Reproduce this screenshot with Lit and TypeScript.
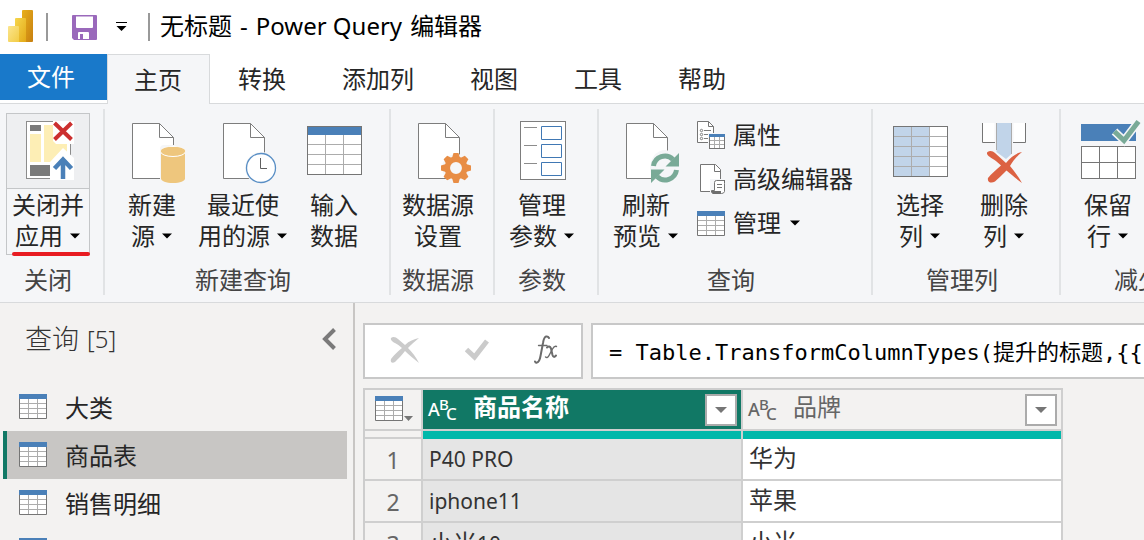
import { LitElement, html, svg, css, nothing } from 'lit';
import { customElement, property, state } from 'lit/decorators.js';
import { classMap } from 'lit/directives/class-map.js';

const page = svg`<path d="M12.5 3.5H39.5L53.5 17.5V58.5H12.5Z" fill="#fff" stroke="#7d7d7d"/><path d="M39.5 3.5V17.5H53.5" fill="none" stroke="#7d7d7d"/>`;

const gearTeeth = [0, 45, 90, 135, 180, 225, 270, 315];

const bigIcons: Record<string, unknown> = {
  closeApply: svg`
    <rect x="10.5" y="2.5" width="44" height="57" fill="#fff" stroke="#8c8c8c"/>
    <rect x="14" y="6" width="11" height="6" fill="#7a7a7a"/>
    <rect x="14" y="15" width="11" height="28" fill="#fdeeb5"/>
    <rect x="28" y="6" width="23" height="37" fill="#fdeeb5"/>
    <rect x="14" y="46" width="20" height="11" fill="#7a7a7a"/>
    <path d="M37 2H58V25H40L37 22Z" fill="#fff"/>
    <path d="M47 29L58 39V61H34V43Z" fill="#fff"/>
    <path d="M38.500 4L55.500 20.500M55.500 4L38.500 20.500" stroke="#cc2f2f" stroke-width="4"/>
    <path d="M47 60V41M38.500 49.500L47 40.500L55.500 49.500" fill="none" stroke="#4a80b8" stroke-width="4.500"/>`,
  newSource: svg`${page}
    <rect x="40" y="25" width="26" height="38" rx="4" fill="#f5f6f8"/>
    <path d="M41 31V58.500C41 61 46 63 53 63S65 61 65 58.500V31Z" fill="#eec67d"/>
    <ellipse cx="53" cy="31.500" rx="12.500" ry="5" fill="#eec67d" stroke="#fff"/>
    <path d="M41 31C41 28.500 46 27 53 27S65 28.500 65 31" fill="#eec67d"/>`,
  recent: svg`${page}
    <circle cx="50" cy="48" r="16" fill="#f5f6f8"/>
    <circle cx="50" cy="48" r="14.500" fill="#fff" stroke="#5a8fc5" stroke-width="1.300"/>
    <path d="M49.500 38V48.500H56" fill="none" stroke="#5f5f5f"/>`,
  enterData: svg`
    <rect x="5.500" y="6.500" width="54" height="48" fill="#fff"/>
    <path d="M23.500 15V54M41.500 15V54M6 24.500H59M6 34.500H59M6 44.500H59" stroke="#acacac"/>
    <rect x="6" y="7" width="53" height="8" fill="#4a80b8"/>
    <rect x="5.500" y="6.500" width="54" height="48" fill="none" stroke="#757575"/>`,
  settings: svg`${page}
    <circle cx="50" cy="48" r="14" fill="#f5f6f8"/>
    ${gearTeeth.map((a) => svg`<path d="M46 38L47.500 33H52.500L54 38Z" fill="#e88d45" transform="rotate(${a} 50 48)"/>`)}
    <circle cx="50" cy="48" r="8.700" fill="none" stroke="#e88d45" stroke-width="5.500"/>`,
  params: svg`
    <rect x="10.500" y="1.500" width="45" height="58" fill="#fff" stroke="#7d7d7d"/>
    <path d="M14 7.500H27M14 25.500H27M14 43.500H27" stroke="#8c8c8c"/>
    <path d="M31.500 6.500H51.500V19.500H31.500ZM31.500 24.500H51.500V37.500H31.500ZM31.500 42.500H51.500V55.500H31.500Z" fill="#fff" stroke="#4078b4"/>`,
  refresh: svg`${page}
    <path d="M37 47A14 15 0 0 1 62 36L65 33V47H37V63Z" fill="#f5f6f8"/>
    <circle cx="51" cy="48" r="15" fill="#f5f6f8"/>
    <path d="M39.500 46A11.500 11.500 0 0 1 59 39.500M62.500 50A11.500 11.500 0 0 1 43 56.500" fill="none" stroke="#79aa97" stroke-width="5"/>
    <path d="M65 33V46.500H51.500ZM37 63V49.500H50.500Z" fill="#79aa97"/>`,
  chooseCols: svg`
    <rect x="5.500" y="6.500" width="54" height="50" fill="#fff"/>
    <rect x="6" y="7" width="35" height="49" fill="#c1d4e9"/>
    <path d="M23.500 7V56M41.500 7V56M6 16.500H59M6 26.500H59M6 36.500H59M6 46.500H59" stroke="#acacac"/>
    <rect x="5.500" y="6.500" width="54" height="50" fill="none" stroke="#757575"/>`,
  removeCols: svg`
    <path d="M10.500 3V22.500H22.500V3" fill="#fff"/><path d="M41.500 3V22.500H53.500V3" fill="#fff"/>
    <path d="M10.500 3V22.500H23M41 22.500H53.500V3" fill="none" stroke="#757575"/>
    <path d="M24.500 3V32L34 39L39.500 34V3Z" fill="#c1d4e9"/>
    <path d="M24.500 3V30M39.500 3V34" stroke="#acacac"/>
    <path d="M15.500 32C18 30 21 31 23 33L34 43C39 37 44 33 50 32C45 36 41 41 38 46C42 51 46 56 50 63C44 59 39 54 34.500 50.500C30 55 26 59 23 61.500C19 64 15 62 16 58C19 54 24 50 29 45.500C25 41 19 38 16.500 36C15 34.500 14.500 33 15.500 32Z" fill="#dc6243" stroke="#f5f6f8" stroke-width="1.500" paint-order="stroke"/>`,
  keepRows: svg`
    <rect x="5" y="4" width="55" height="17" fill="#4a80b8"/>
    <rect x="5.500" y="26.500" width="54" height="32" fill="#fff" stroke="#757575"/>
    <path d="M23.500 27V58M41.500 27V58M6 42.500H59" stroke="#757575"/>
    <path d="M38.500 11.500L48 20.500L62.500 1.500" fill="none" stroke="#f5f6f8" stroke-width="8"/>
    <path d="M38.500 11.500L48 20.500L62.500 1.500" fill="none" stroke="#79aa97" stroke-width="5"/>`,
};

const tableIcon = html`<svg class="sheet" width="28" height="25" viewBox="0 0 28 25" aria-hidden="true">
  <rect x="0.5" y="0.5" width="27" height="24" fill="#fff"/>
  <path d="M9.500 5V24M18.500 5V24M1 9.500H27M1 14.500H27M1 19.500H27" stroke="#acacac"/>
  <path d="M0.500 4V24.500H27.500V4" fill="none" stroke="#757575"/>
  <rect width="28" height="5" fill="#4a80b8"/></svg>`;

const propsIcon = html`<svg width="28" height="28" viewBox="0 0 28 28" aria-hidden="true">
  <path d="M0.500 0.500H11.500L16.500 5.500V21.500H0.500Z" fill="#fff" stroke="#757575"/>
  <path d="M11.500 0.500V5.500H16.500" fill="none" stroke="#757575"/>
  <g fill="none" stroke="#7d7d7d"><circle cx="4.500" cy="9.500" r="1.200"/><circle cx="4.500" cy="13.500" r="1.200"/><circle cx="4.500" cy="17.500" r="1.200"/><path d="M7 9.500H14M7 13.500H11M7 17.500H11"/></g>
  <rect x="11" y="12" width="17" height="16" fill="#f5f6f8"/>
  <rect x="12.500" y="13.500" width="15" height="14" fill="#fff" stroke="#757575"/>
  <path d="M17.500 16V27M22.500 16V27M13 19.500H27M13 23.500H27" stroke="#acacac"/>
  <rect x="12" y="13" width="16" height="3" fill="#4a80b8"/></svg>`;

const scriptIcon = html`<svg width="28" height="30" viewBox="0 0 28 30" aria-hidden="true">
  <path d="M3.500 0.500H18.500L23.500 5.500V27.500H3.500Z" fill="#fff" stroke="#757575"/>
  <path d="M17.500 0.500V7.500H23.500" fill="none" stroke="#757575"/>
  <path d="M13 15H30V30H13Z" fill="#f5f6f8"/>
  <path d="M17.500 26.500V18.500Q17.500 16.500 19.500 16.500H29.500V19.500H27.500V27.500Q27 29.500 24.500 29.500H16Q14 29 14.500 26.500Z" fill="#fff" stroke="#757575"/>
  <path d="M20 20.500H25M20 23.500H25" stroke="#757575"/><path d="M14 27H24V30H16Z" fill="#6e6e6e"/><path d="M27 16H30V19H27Z" fill="#6e6e6e"/></svg>`;

const caret = html`<svg class="caret" width="12" height="6" viewBox="0 0 12 6" aria-hidden="true"><path d="M1 0.500H11L6 5.500Z" fill="#000"/></svg>`;

interface BigCommand { icon: string; top: string; bottom: string; menu?: boolean; hot?: boolean }
interface Group { name: string; commands: BigCommand[]; side?: boolean }

const groups: Group[] = [
  { name: '关闭', commands: [{ icon: 'closeApply', top: '关闭并', bottom: '应用', menu: true, hot: true }] },
  { name: '新建查询', commands: [
    { icon: 'newSource', top: '新建', bottom: '源', menu: true },
    { icon: 'recent', top: '最近使', bottom: '用的源', menu: true },
    { icon: 'enterData', top: '输入', bottom: '数据' },
  ] },
  { name: '数据源', commands: [{ icon: 'settings', top: '数据源', bottom: '设置' }] },
  { name: '参数', commands: [{ icon: 'params', top: '管理', bottom: '参数', menu: true }] },
  { name: '查询', side: true, commands: [{ icon: 'refresh', top: '刷新', bottom: '预览', menu: true }] },
  { name: '管理列', commands: [
    { icon: 'chooseCols', top: '选择', bottom: '列', menu: true },
    { icon: 'removeCols', top: '删除', bottom: '列', menu: true },
  ] },
  { name: '减少行', commands: [
    { icon: 'keepRows', top: '保留', bottom: '行', menu: true },
    { icon: '', top: '', bottom: '' },
  ] },
];

const shared = css`
  * { box-sizing: border-box; }
  button {
    font: inherit;
    color: inherit;
    background: none;
    border: 0;
    padding: 0;
    margin: 0;
    text-align: inherit;
  }
  svg { display: block; flex: none; }
`;

@customElement('pq-titlebar')
class PqTitlebar extends LitElement {
  static styles = [shared, css`
    :host { display: flex; align-items: center; height: 54px; padding: 0 8px; background: #fff; flex: none; }
    .rule { width: 2px; height: 28px; background: #999; }
    .logo { margin-right: 13px; }
    .save { margin: 0 18px 0 24px; }
    .more { margin-right: 20px; }
    h1 { display: flex; gap: 8px; margin: 0 0 0 10px; padding-bottom: 2px; font-size: 24px; line-height: 32px; font-weight: 400; color: #000; white-space: nowrap; }
  `];
  render() {
    return html`
      <svg class="logo" width="25" height="34" viewBox="0 0 25 34" aria-hidden="true">
        <defs>
          <linearGradient id="a" x1="0" y1="0" x2="1" y2="1"><stop offset="0" stop-color="#e8b01c"/><stop offset="1" stop-color="#c77f10"/></linearGradient>
          <linearGradient id="b" x1="0" y1="0" x2="1" y2="1"><stop offset="0" stop-color="#f6d64d"/><stop offset="1" stop-color="#e3a917"/></linearGradient>
          <linearGradient id="c" x1="0" y1="0" x2="1" y2="1"><stop offset="0" stop-color="#fbe58e"/><stop offset="1" stop-color="#f2cc45"/></linearGradient>
        </defs>
        <rect x="14" y="0" width="11" height="32" rx="1" fill="url(#a)"/>
        <path d="M7 9a1 1 0 0 1 1-1H17a1 1 0 0 1 1 1V32H7Z" fill="url(#b)"/>
        <path d="M0 17a1 1 0 0 1 1-1H10a1 1 0 0 1 1 1V32H1a1 1 0 0 1-1-1Z" fill="url(#c)"/>
      </svg>
      <span class="rule"></span>
      <button class="save" aria-label="保存">
        <svg width="25" height="25" viewBox="0 0 25 25"><path d="M1 0H24a1 1 0 0 1 1 1V24a1 1 0 0 1-1 1H2L0 23V1a1 1 0 0 1 1-1Z" fill="#9a69bb"/><path d="M4 1.500H21V12a1 1 0 0 1-1 1H5a1 1 0 0 1-1-1Z" fill="#fff"/><path d="M6 18a1 1 0 0 1 1-1H16a1 1 0 0 1 1 1V24H11V19H8V24H6Z" fill="#fff"/><rect x="8" y="19" width="3" height="5" fill="#9a69bb"/></svg>
      </button>
      <button class="more" aria-label="自定义">
        <svg width="13" height="10" viewBox="0 0 13 10"><path d="M1 0.500H12" stroke="#000"/><path d="M1.500 4H11.500L6.500 9Z" fill="#000"/></svg>
      </button>
      <span class="rule"></span>
      <h1><span>无标题</span> <span>-</span> <span>Power Query</span> <span>编辑器</span></h1>`;
  }
}

@customElement('pq-tabs')
class PqTabs extends LitElement {
  @state() private active = '主页';
  static styles = [shared, css`
    :host { display: block; flex: none; background: #fff; }
    nav { display: flex; height: 50px; font-size: 24px; line-height: 32px; color: #262626; border-bottom: 1px solid #d8dadc; }
    button { padding: 1px 28px 0; height: 49px; white-space: nowrap; }
    .file { height: 46px; padding: 0 32px 0 27px; background: #1979ca; color: #fff; }
    .active { height: 50px; padding: 0 27px 0 26px; background: #f5f6f8; border: 1px solid #d8dadc; border-bottom: 0; }
  `];
  render() {
    return html`<nav>
      <button class="file">文件</button>
      ${['主页', '转换', '添加列', '视图', '工具', '帮助'].map((t) => html`
        <button class=${classMap({ active: t === this.active })} @click=${() => { this.active = t; }}>${t}</button>`)}
    </nav>`;
  }
}

@customElement('pq-ribbon')
class PqRibbon extends LitElement {
  static styles = [shared, css`
    :host { display: block; flex: none; overflow: hidden; background: #f5f6f8; border-bottom: 1px solid #d8dadc; color: #262626; font-size: 24px; }
    .groups { display: flex; padding: 5px 0 7px 1px; }
    .group { flex: none; display: flex; flex-direction: column; align-items: center; padding: 4px 13px 0 5px; border-right: 2px solid #e1e3e5; height: 186px; }
    .row { display: flex; }
    .big { display: flex; flex-direction: column; align-items: center; min-width: 84px; height: 142px; padding: 0 4px; text-align: center; position: relative; }
    .art { display: flex; flex-direction: column; align-items: center; justify-content: center; align-self: stretch; height: 76px; padding-top: 1px; }
    .art svg { overflow: visible; }
    .text { line-height: 31px; white-space: nowrap; }
    .line { display: flex; align-items: center; justify-content: center; }
    .caret { margin-left: 6px; }
    .hot { padding: 0; border: 1px solid #c4c6c8; }
    .hot .art { height: 75px; padding: 0; background: #eeeff1; border-bottom: 1px solid #c4c6c8; }
    .mark { position: absolute; left: 5px; right: -1px; bottom: -2px; height: 4px; border-radius: 2px; background: #e81c22; }
    .name { margin: 9px 0 0; line-height: 32px; color: #444; white-space: nowrap; }
    .side { display: flex; flex-direction: column; padding-left: 9px; margin-right: -3px; }
    .side button { display: grid; grid-template-columns: 28px auto auto; column-gap: 8px; align-items: center; justify-content: start; height: 44px; line-height: 32px; white-space: nowrap; }
    .side .caret { margin: 0; }
  `];
  private big(c: BigCommand) {
    return html`<button class=${classMap({ big: true, hot: !!c.hot })}>
      <span class="art"><svg width="64" height="64" viewBox="0 0 64 64" aria-hidden="true">${bigIcons[c.icon] ?? nothing}</svg></span>
      <span class="text"><span class="line">${c.top}</span><span class="line">${c.bottom}${c.menu ? caret : nothing}</span></span>
      ${c.hot ? html`<span class="mark"></span>` : nothing}
    </button>`;
  }
  render() {
    return html`<div class="groups">${groups.map((g) => html`
      <section class="group" aria-label=${g.name}>
        <div class="row">
          ${g.commands.map((c) => this.big(c))}
          ${g.side ? html`<div class="side">
            <button>${propsIcon}<span>属性</span></button>
            <button>${scriptIcon}<span>高级编辑器</span></button>
            <button>${tableIcon}<span>管理</span>${caret}</button>
          </div>` : nothing}
        </div>
        <p class="name">${g.name}</p>
      </section>`)}</div>`;
  }
}

@customElement('pq-queries')
class PqQueries extends LitElement {
  @state() private selected = 1;
  static styles = [shared, css`
    :host { display: block; flex: 0 0 353px; border-right: 2px solid #c8c6c4; background: #f3f2f1; color: #262626; overflow: hidden; }
    header { display: flex; align-items: center; justify-content: space-between; height: 72px; padding: 0 17px 0 25px; }
    h2 { display: flex; gap: 8px; margin: 0; font-size: 27px; line-height: 36px; font-weight: 300; color: #333; }
    .count { font-size: 24px; }
    ul { list-style: none; margin: 0; padding: 8px 6px 0 3px; }
    .item { display: flex; align-items: center; gap: 18px; width: 100%; height: 48px; padding-left: 12px; border-left: 4px solid transparent; font-size: 24px; line-height: 32px; }
    .item svg { margin-bottom: 1px; }
    .item span { padding-top: 2px; }
    .item.on { background: #c8c6c4; border-left-color: #117865; }
  `];
  render() {
    return html`
      <header><h2><span>查询</span> <span class="count">[5]</span></h2>
        <button aria-label="折叠"><svg width="14" height="22" viewBox="0 0 14 22"><path d="M12.500 1.500L3 11L12.500 20.500" fill="none" stroke="#7a7a7a" stroke-width="4"/></svg></button>
      </header>
      <ul>${['大类', '商品表', '销售明细', ''].map((q, i) => html`
        <li><button class=${classMap({ item: true, on: i === this.selected })} @click=${() => { this.selected = i; }}>${tableIcon}<span>${q}</span></button></li>`)}</ul>`;
  }
}

@customElement('pq-grid')
class PqGrid extends LitElement {
  @property({ type: String }) formula = '= Table.TransformColumnTypes(提升的标题,{{';
  static styles = [shared, css`
    :host { display: block; flex: 1; min-width: 0; padding: 20px 0 0 8px; background: #f3f2f1; overflow: hidden; }
    .bar { display: flex; gap: 8px; height: 56px; margin-bottom: 9px; }
    .tools { display: flex; align-items: center; justify-content: space-between; flex: 0 0 220px; padding: 0 23px 2px 25px; background: #fff; border: 2px solid #c8c8c8; }
    .formula { flex: 1; min-width: 0; height: 56px; padding: 0 0 2px 16px; border: 2px solid #c8c8c8; border-right: 0; border-radius: 0; outline: 0; background: #fff; color: #000; font-family: "DejaVu Sans Mono", "Noto Sans CJK SC", monospace; font-size: 24px; font-size-adjust: ch-width 0.552; }
    table { table-layout: fixed; width: 700px; border-collapse: separate; border-spacing: 0; border-top: 2px solid #cdcdcd; border-left: 2px solid #cdcdcd; color: #333; }
    .index { width: 58px; }
    th, td { padding: 0; border-right: 2px solid #cfcfcf; border-bottom: 2px solid #cfcfcf; text-align: left; white-space: nowrap; overflow: hidden; }
    tbody th, tbody td { height: 42px; }
    thead th { height: 41px; }
    tbody th { font-weight: 400; font-size: 23px; color: #666; text-align: center; line-height: 32px; padding-top: 2px; }
    td { background: #fff; padding: 0 0 2px 6px; font-size: 24px; line-height: 32px; }
    td.on { background: #e5e5e5; font-size: 21px; padding-bottom: 0; }
    .wide { font-size: 24px; }
    .head { display: flex; align-items: center; height: 39px; padding: 0 4px 0 5px; font-size: 24px; line-height: 32px; color: #666; font-weight: 400; }
    .head.on { background: #117865; color: #fff; font-weight: 700; }
    .title { flex: 1; padding: 0 0 6px 15px; }
    .drop { display: grid; place-items: center; width: 32px; height: 32px; border: 2px solid #ababab; background: #fff; }
    .corner { display: flex; align-items: center; height: 39px; padding: 0 0 2px 10px; }
    .quality td { height: 8px; padding: 0; border-bottom: 0; background: #01b8aa; font-size: 0; line-height: 0; }
    .quality th { height: 8px; padding: 0; font-size: 0; line-height: 0; }
    .abc { font-family: "Noto Sans", sans-serif; font-weight: 500; overflow: visible; }
  `];
  private abc() {
    return html`<svg class="abc" width="30" height="28" viewBox="0 0 30 28" fill="currentColor" aria-hidden="true">
      <text x="0" y="20" font-size="18">A</text><text x="11" y="14" font-size="15">B</text><text x="18" y="24" font-size="17">C</text></svg>`;
  }
  private head(name: string, on: boolean) {
    return html`<th scope="col"><div class=${classMap({ head: true, on })}>${this.abc()}<span class="title">${name}</span>
      <button class="drop" aria-label="筛选"><svg width="12" height="6" viewBox="0 0 12 6"><path d="M0 0H12L6 6Z" fill="#767676"/></svg></button></div></th>`;
  }
  render() {
    return html`
      <div class="bar">
        <div class="tools">
          <button aria-label="取消"><svg width="30" height="28" viewBox="0 0 30 28"><path d="M1 2C3 0 6 1 8 3L15 9C19 5 24 3 29 2C25 5 21 9 18 12C22 16 26 21 29 27C24 23 19 19 15 15C12 19 8 23 5 26C2 28 0 26 1 23C4 19 8 15 12 12C8 8 4 7 2 5C1 4 0.500 3 1 2Z" fill="#cbcbcb"/></svg></button>
          <button aria-label="确定"><svg width="24" height="22" viewBox="0 0 24 22"><path d="M1.500 10.500L9.500 18L22 2" fill="none" stroke="#cbcbcb" stroke-width="5"/></svg></button>
          <button aria-label="函数"><svg width="24" height="30" viewBox="0 0 24 30"><g fill="none" stroke="#6b6b6b" stroke-linecap="round"><path d="M15 3Q14 1 12 1.500Q10 2 9 8L6.500 21Q5.500 27 3 27.500Q1.500 28 1 26.500" stroke-width="2"/><path d="M4.500 10.500H13" stroke-width="1.300"/><path d="M13 12.500Q15.500 10 17 13.500L18.500 20Q19.500 23.500 22 20.500" stroke-width="2"/><path d="M22.500 11.500Q20.500 10.500 18.500 14L15 20.500Q13.500 23.500 11.500 22" stroke-width="1.400"/></g></svg></button>
        </div>
        <input class="formula" aria-label="公式" .value=${this.formula}>
      </div>
      <table>
        <colgroup><col class="index"><col><col></colgroup>
        <thead><tr>
          <th><div class="corner">${tableIcon}<svg width="10" height="24" viewBox="0 0 10 24"><path d="M1 19H10L5.500 24Z" fill="#767676"/></svg></div></th>
          ${this.head('商品名称', true)}${this.head('品牌', false)}
        </tr></thead>
        <tbody>
          <tr class="quality"><th></th><td></td><td></td></tr>
          <tr><th scope="row">1</th><td class="on">P40 PRO</td><td>华为</td></tr>
          <tr><th scope="row">2</th><td class="on">iphone11</td><td>苹果</td></tr>
          <tr><th scope="row">3</th><td class="on"><span class="wide">小米</span>10</td><td>小米</td></tr>
        </tbody>
      </table>`;
  }
}

@customElement('app-root')
class AppRoot extends LitElement {
  static styles = css`
    :host { display: flex; flex-direction: column; height: 100vh; overflow: hidden; background: #f3f2f1; font-family: "Noto Sans", "Noto Sans CJK SC", sans-serif; }
    main { display: flex; flex: 1; min-height: 0; }
  `;
  render() {
    return html`<pq-titlebar></pq-titlebar><pq-tabs></pq-tabs><pq-ribbon></pq-ribbon>
      <main><pq-queries></pq-queries><pq-grid></pq-grid></main>`;
  }
}
